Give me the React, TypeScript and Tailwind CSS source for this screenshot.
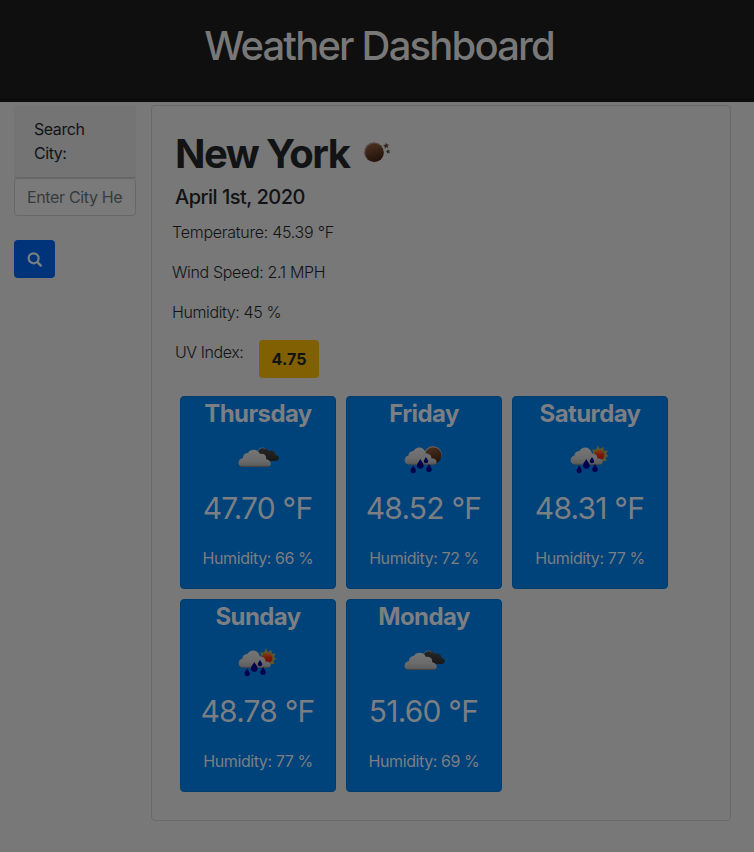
import React from 'react';

type Sky = 'clouds' | 'moonRain' | 'sunRain';

interface Day {
  name: string;
  temp: string;
  humidity: string;
  sky: Sky;
}

const days: Day[] = [
  { name: 'Thursday', temp: '47.70', humidity: '66', sky: 'clouds' },
  { name: 'Friday', temp: '48.52', humidity: '72', sky: 'moonRain' },
  { name: 'Saturday', temp: '48.31', humidity: '77', sky: 'sunRain' },
  { name: 'Sunday', temp: '48.78', humidity: '77', sky: 'sunRain' },
  { name: 'Monday', temp: '51.60', humidity: '69', sky: 'clouds' },
];

function Gradients() {
  return (
    <svg width="0" height="0" className="absolute">
      <defs>
        <linearGradient id="cloud" x1="0" y1="0" x2="0" y2="1">
          <stop offset="0" stopColor="#757575" />
          <stop offset="0.6" stopColor="#6c6c6c" />
          <stop offset="0.9" stopColor="#5f5f5f" />
          <stop offset="1" stopColor="#3c3c3c" />
        </linearGradient>
        <linearGradient id="dark" x1="0" y1="0" x2="0" y2="1">
          <stop offset="0" stopColor="#262626" />
          <stop offset="1" stopColor="#181818" />
        </linearGradient>
        <linearGradient id="moon" x1="0" y1="0" x2="0.3" y2="1">
          <stop offset="0" stopColor="#4d3222" />
          <stop offset="0.5" stopColor="#392216" />
          <stop offset="1" stopColor="#24140b" />
        </linearGradient>
        <linearGradient id="sun" x1="0" y1="0" x2="0" y2="1">
          <stop offset="0" stopColor="#744a14" />
          <stop offset="0.45" stopColor="#781c0a" />
          <stop offset="1" stopColor="#6e0a08" />
        </linearGradient>
      </defs>
    </svg>
  );
}

function Drop({ x, y, s }: { x: number; y: number; s: number }) {
  return (
    <path
      transform={`translate(${x} ${y}) scale(${s})`}
      d="M0 0C1 2.3 3.2 4 3.2 6.2A3.2 3 0 0 1-3.2 6.2C-3.2 4-1 2.3 0 0Z"
      fill="#00004e"
    />
  );
}

function SkyIcon({ sky }: { sky: Sky }) {
  if (sky === 'clouds') {
    return (
      <svg viewBox="0 0 50 50" className="block h-[50px] w-[50px]">
        <path d="M25 20C26 14 33 13.500 35.500 18C39.500 16.500 42.500 19 42.500 22C47.500 22.500 46.500 28 42.500 28H29C25 27 23 24 25 20Z" fill="url(#dark)" />
        <path d="M24 20C25 14.500 31 13.500 32.500 16.500" fill="none" stroke="#606060" strokeWidth="0.8" />
        <path d="M10 34C4 34 4 26 10 25C10 21 13 20 15 20C17 15.500 25 15.500 27 21C31 19.500 34 23 33 26C39 27 39.500 34 34 34Z" fill="url(#cloud)" />
      </svg>
    );
  }
  return (
    <svg viewBox="0 0 50 50" className="block h-[50px] w-[50px]">
      {sky === 'moonRain' ? (
        <>
          <circle cx="34" cy="21.800" r="8.800" fill="#655a54" />
          <circle cx="34.300" cy="22.600" r="8.200" fill="url(#moon)" />
        </>
      ) : (
        <>
          <path d="M33 12L34.700 16L38.500 13.800L38.800 17.800L43 17.500L41 20.700L43.500 23L40.500 24.500L41.500 28L38 28L36 31L33 28.300L28.500 29L29 25L26 22L28.500 20.500L27 16.500L31 16.500Z" fill="#5c5630" />
          <circle cx="34" cy="22" r="5.400" fill="url(#sun)" />
        </>
      )}
      <path d="M12 32C4 32 4 24 9.500 22.500C9.500 19 13 18 14.500 18C17 13 25 13 27 20.500C31 20.500 32.500 23 32.500 25.500C38.500 24.500 39.500 32 34 32Z" fill="url(#cloud)" />
      <Drop x={14.2} y={32.6} s={0.82} />
      <Drop x={21.3} y={26} s={1.05} />
      <Drop x={27} y={24} s={0.68} />
      <Drop x={30} y={31} s={0.86} />
    </svg>
  );
}

function DayCard({ day }: { day: Day }) {
  return (
    <div className="flex h-[193px] w-[156px] flex-col items-center rounded-[4px] border border-[#003d6f] bg-[#00427a] text-[#7b7f83]">
      <h5 className="mt-[2px] h-[29px] text-[24px] font-bold leading-[29px] tracking-[-0.6px]">{day.name}</h5>
      <div className="mt-[5px]">
        <SkyIcon sky={day.sky} />
      </div>
      <div className="mt-[6px] mr-px text-[30px] leading-[38px] tracking-[-0.8px]">{day.temp} °F</div>
      <div className="mt-[19px] text-[16px] leading-[24px] tracking-[-0.42px]">Humidity: {day.humidity} %</div>
    </div>
  );
}

export default function App() {
  return (
    <div className="h-[852px] w-[754px] overflow-hidden bg-[#787878] font-['Inter',sans-serif] text-[#111315]">
      <Gradients />
      <header className="flex h-[102px] justify-center border-b-4 border-[#0c0c0c] bg-[#0f0f0f] pt-[22px] pl-[4px]">
        <h1 className="h-[48px] text-[40px] font-medium leading-[48px] tracking-[-1.82px] text-[#787878]">Weather Dashboard</h1>
      </header>
      <div className="flex pt-[3px]">
        <aside className="ml-[14px] w-[122px] pt-[1px]">
          <div className="h-[72px] border-b border-[#676767] bg-[#747474] pt-[11px] pl-[20px] text-[16px] leading-[24px] tracking-[-0.45px]">
            Search
            <br />
            City:
          </div>
          <div className="flex h-[38px] items-center overflow-hidden rounded-[4px] border border-[#65686b] bg-[#7a7a7a] pl-[12px] text-[16px] tracking-[-0.35px] whitespace-nowrap text-[#363a3e]">
            Enter City He
          </div>
          <button className="mt-[24px] flex h-[38px] w-[41px] items-center justify-center rounded-[4px] bg-[#00347a]">
            <svg viewBox="0 0 16 16" className="h-[16px] w-[16px]" fill="none" stroke="#7b7f83">
              <circle cx="6.600" cy="7.300" r="5" strokeWidth="2.200" />
              <path d="M10.400 11.200L13.800 14.600" strokeWidth="2.400" strokeLinecap="round" />
            </svg>
          </button>
        </aside>
        <main className="ml-[15px] h-[716px] w-[580px] rounded-[4px] border border-[#696969] pl-[20px]">
          <div className="flex h-[48px] pl-[3px] mt-[24px]">
            <h2 className="w-[176px] whitespace-nowrap text-[40px] font-bold leading-[48px] tracking-[-1.55px]">New York</h2>
            <svg viewBox="0 0 32 24" className="mt-[10px] ml-[12px] h-[24px] w-[32px]">
              <circle cx="11" cy="12.300" r="10" fill="#584840" />
              <circle cx="11.500" cy="12.800" r="9.200" fill="url(#moon)" />
              <path d="M23 2.500l.8 2 2.100-.3-1.300 1.700.9 1.900-2.200-.6-1.600 1.500v-2.200l-1.700-1.200 2.200-.5zM25 9l.6 1.500 1.700-.1-1.100 1.300.7 1.500-1.700-.5-1.300 1.100.1-1.700-1.400-.9 1.700-.5z" fill="#342720" />
            </svg>
          </div>
          <h4 className="pl-[3px] mt-[7px] text-[20px] font-medium leading-[24px] tracking-[-0.5px]">April 1st, 2020</h4>
          <p className="mt-[11px] text-[16px] font-light leading-[24px] tracking-[-0.26px]">Temperature: 45.39 °F</p>
          <p className="mt-[16px] text-[16px] font-light leading-[24px] tracking-[-0.34px]">Wind Speed: 2.1 MPH</p>
          <p className="mt-[16px] text-[16px] font-light leading-[24px] tracking-[-0.38px]">Humidity: 45 %</p>
          <div className="mt-[16px] flex h-[38px] pl-[3px]">
            <p className="w-[84px] text-[16px] font-light leading-[24px] tracking-[-0.42px]">UV Index:</p>
            <div className="flex h-[38px] w-[60px] items-center justify-center rounded-[4px] bg-[#806003] text-[16px] font-bold tracking-[0.1px]">4.75</div>
          </div>
          <div className="mt-[18px] ml-[8px] flex w-[500px] flex-wrap gap-[10px]">
            {days.map((d) => (
              <DayCard key={d.name} day={d} />
            ))}
          </div>
        </main>
      </div>
    </div>
  );
}
